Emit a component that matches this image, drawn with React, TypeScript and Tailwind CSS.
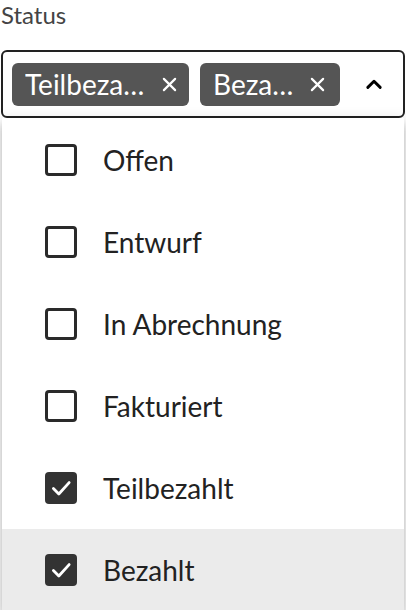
import React from "react";

const options = [
  { label: "Offen", checked: false },
  { label: "Entwurf", checked: false },
  { label: "In Abrechnung", checked: false },
  { label: "Fakturiert", checked: false },
  { label: "Teilbezahlt", checked: true },
  { label: "Bezahlt", checked: true, active: true },
];

const Chip = ({ label, labelWidth, gap, pr }: { label: string; labelWidth: string; gap: string; pr: string }) => (
  <div className={`h-[43px] shrink-0 flex items-center rounded-[6px] bg-[#555555] pl-[13px] ${pr} text-white`}>
    <span className={`${labelWidth} truncate text-[28px] leading-[34px]`}>{label}</span>
    <svg viewBox="0 0 16 16" className={`w-[15px] h-[15px] ${gap} shrink-0`}>
      <path d="M2 2 L14 14 M14 2 L2 14" stroke="white" strokeWidth="2.3" strokeLinecap="round" />
    </svg>
  </div>
);

const Checkbox = ({ checked }: { checked: boolean }) =>
  checked ? (
    <div className="w-[32px] h-[32px] rounded-[4px] bg-[#333333] flex items-center justify-center">
      <svg viewBox="0 0 24 24" className="w-[26px] h-[26px]">
        <path d="M5 12.5 L10 17.5 L19.5 7" fill="none" stroke="white" strokeWidth="2.6" strokeLinecap="round" strokeLinejoin="round" />
      </svg>
    </div>
  ) : (
    <div className="w-[32px] h-[32px] rounded-[4px] border-[3px] border-[#2a2a2a]" />
  );

export default function App() {
  return (
    <div className="w-[406px] h-[610px] overflow-hidden bg-white font-['Lato',sans-serif]">
      <div className="pl-[1px] text-[24px] leading-[30px] text-[#444444]">Status</div>

      <div className="mx-[1px] mt-[20px] h-[68px] flex items-center gap-[11px] rounded-[6px] border-2 border-[#222222] pl-[9px] pr-[20px]">
        <Chip label="Teilbezahlt" labelWidth="w-[125px]" gap="ml-[12px]" pr="pr-[12px]" />
        <Chip label="Bezahlt" labelWidth="w-[84px]" gap="ml-[13px]" pr="pr-[15px]" />
        <svg viewBox="0 0 16 16" className="ml-auto w-[18px] h-[18px]">
          <path d="M2.5 11 L8 5.5 L13.5 11" fill="none" stroke="black" strokeWidth="2.6" strokeLinecap="round" strokeLinejoin="round" />
        </svg>
      </div>

      <div className="mx-[2px] pt-[1px] bg-white rounded-b-[6px] shadow-[0_5px_5px_-3px_rgba(0,0,0,0.2),0_8px_10px_1px_rgba(0,0,0,0.14),0_3px_14px_2px_rgba(0,0,0,0.12)]">
        {options.map((o) => (
          <div
            key={o.label}
            className={`h-[82px] flex items-center pl-[43px] gap-[26px] ${o.active ? "bg-[#ebebeb]" : ""}`}
          >
            <Checkbox checked={o.checked} />
            <span className="text-[28px] text-[#222222]">{o.label}</span>
          </div>
        ))}
      </div>
    </div>
  );
}
